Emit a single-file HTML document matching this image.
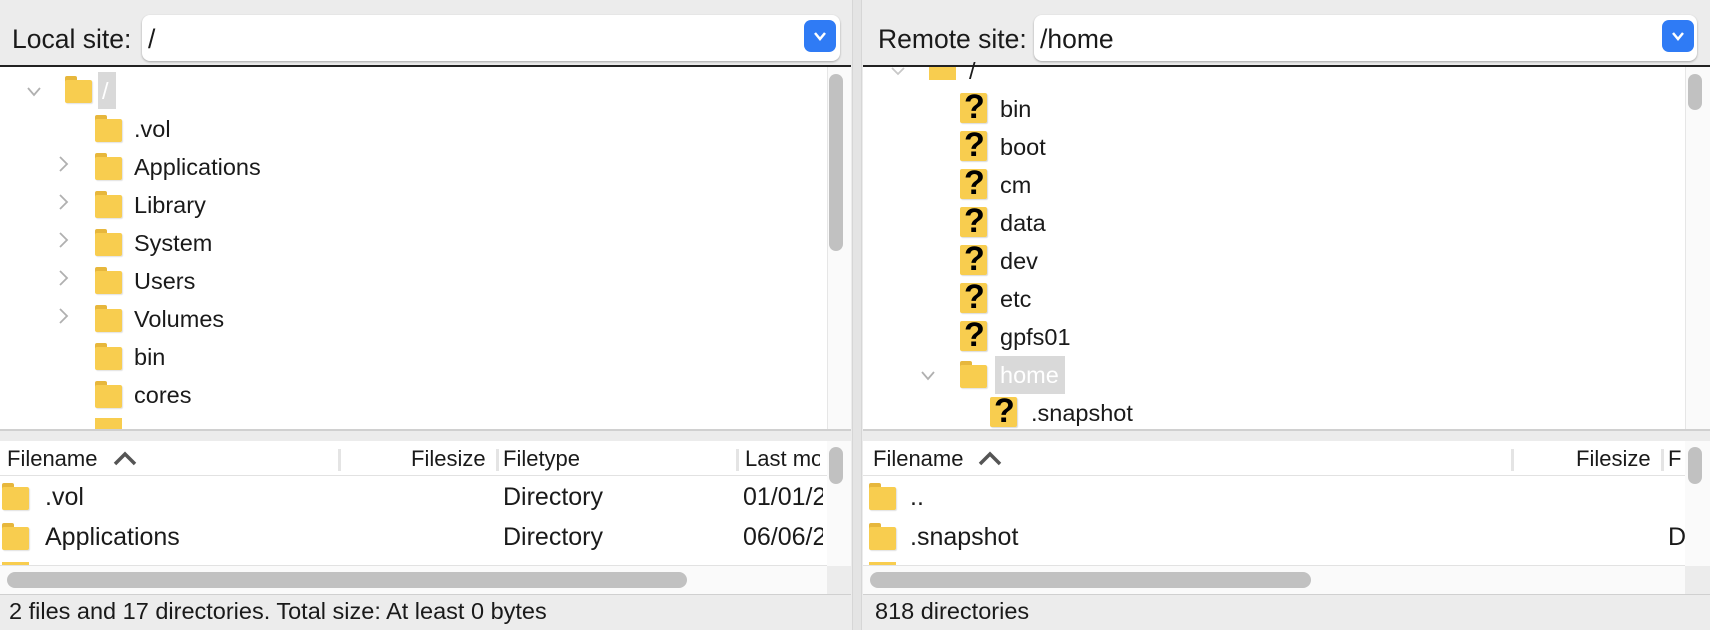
<!DOCTYPE html>
<html><head><meta charset="utf-8"><style>
*{margin:0;padding:0;box-sizing:border-box}
body{width:1710px;height:630px;background:#ececec;font-family:"Liberation Sans",sans-serif;color:#1a1a1a;position:relative;overflow:hidden;font-size:23.5px}
.a{position:absolute;white-space:nowrap}
.fold{position:absolute;width:27px;height:27px}
.fold:before{content:"";position:absolute;left:0;top:0;width:12px;height:6px;background:#e7b73c;border-radius:2px 2px 0 0}
.fold:after{content:"";position:absolute;left:0;top:4px;width:27px;height:23px;background:#f8cd4f;border-radius:2px;box-shadow:1px 1px 1px rgba(0,0,0,.12)}
.q{position:absolute;width:27px;height:30px;background:#f8cd4f;border-radius:2px;box-shadow:1px 1px 1px rgba(0,0,0,.15)}
.q span{position:absolute;left:4px;top:-4px;font-size:34px;font-weight:bold;color:#000;line-height:36px}
.white{position:absolute;background:#fff}
.sb{position:absolute;background:#c1c1c1;border-radius:8px}
.sep{position:absolute;width:3px;height:22px;background:#e4e4e4}
.txt{position:absolute;white-space:nowrap;line-height:26px}
</style></head><body>
<div class="a" style="left:852px;top:0;width:10px;height:630px;background:#e4e4e4;border-left:1px solid #d6d6d6;border-right:1px solid #d6d6d6"></div>

<!-- LEFT header -->
<div class="txt" style="left:12px;top:24px;font-size:26.5px;line-height:30px">Local site:</div>
<div class="a" style="left:142px;top:15px;width:698px;height:46px;background:#fff;border-radius:8px;box-shadow:0 1px 2px rgba(0,0,0,.3)"></div>
<div class="txt" style="left:148px;top:24px;font-size:26.5px;line-height:30px">/</div>
<div class="a" style="left:804px;top:20px;width:32px;height:32px;background:#2f7bf5;border-radius:7px"><svg width="32" height="32"><path d="M11 13l5 6 5-6" stroke="#fff" stroke-width="2.5" fill="none"/></svg></div>
<div class="a" style="left:0;top:65px;width:851px;height:2px;background:#222"></div>

<!-- LEFT tree -->
<div class="white" style="left:0;top:67px;width:827px;height:362px"></div>
<div class="a" style="left:827px;top:67px;width:24px;height:362px;background:#fafafa;border-left:1px solid #e6e6e6"></div>
<div class="sb" style="left:829px;top:74px;width:14px;height:177px"></div>
<svg class="a" style="left:26px;top:86px" width="16" height="12"><path d="M2 2l6 7 6-7" stroke="#b0b0b0" stroke-width="1.8" fill="none"/></svg>
<div class="fold" style="left:65px;top:76px"></div>
<div class="a" style="left:98px;top:72px;width:18px;height:37px;background:#d9d9d9"></div>
<div class="txt" style="left:102px;top:78px;color:#fff">/</div>
<div class="fold" style="left:95px;top:115px"></div><div class="txt" style="left:134px;top:116px">.vol</div>
<svg class="a" style="left:58px;top:155px" width="12" height="18"><path d="M2 2l7 7-7 7" stroke="#b0b0b0" stroke-width="1.8" fill="none"/></svg>
<div class="fold" style="left:95px;top:153px"></div><div class="txt" style="left:134px;top:154px">Applications</div>
<svg class="a" style="left:58px;top:193px" width="12" height="18"><path d="M2 2l7 7-7 7" stroke="#b0b0b0" stroke-width="1.8" fill="none"/></svg>
<div class="fold" style="left:95px;top:191px"></div><div class="txt" style="left:134px;top:192px">Library</div>
<svg class="a" style="left:58px;top:231px" width="12" height="18"><path d="M2 2l7 7-7 7" stroke="#b0b0b0" stroke-width="1.8" fill="none"/></svg>
<div class="fold" style="left:95px;top:229px"></div><div class="txt" style="left:134px;top:230px">System</div>
<svg class="a" style="left:58px;top:269px" width="12" height="18"><path d="M2 2l7 7-7 7" stroke="#b0b0b0" stroke-width="1.8" fill="none"/></svg>
<div class="fold" style="left:95px;top:267px"></div><div class="txt" style="left:134px;top:268px">Users</div>
<svg class="a" style="left:58px;top:307px" width="12" height="18"><path d="M2 2l7 7-7 7" stroke="#b0b0b0" stroke-width="1.8" fill="none"/></svg>
<div class="fold" style="left:95px;top:305px"></div><div class="txt" style="left:134px;top:306px">Volumes</div>
<div class="fold" style="left:95px;top:343px"></div><div class="txt" style="left:134px;top:344px">bin</div>
<div class="fold" style="left:95px;top:381px"></div><div class="txt" style="left:134px;top:382px">cores</div>
<div class="a" style="left:95px;top:418px;width:27px;height:11px;background:#f8cd4f"></div>
<div class="a" style="left:0;top:429px;width:851px;height:2px;background:#d0d0d0"></div>

<!-- LEFT list -->
<div class="white" style="left:0;top:441px;width:827px;height:125px"></div>
<div class="a" style="left:827px;top:441px;width:24px;height:125px;background:#fafafa"></div>
<div class="sb" style="left:829px;top:447px;width:14px;height:37px"></div>
<div class="a" style="left:0;top:475px;width:827px;height:1px;background:#e2e2e2"></div>
<div class="txt" style="left:7px;top:446px;font-size:22px">Filename</div>
<svg class="a" style="left:112px;top:451px" width="26" height="16"><path d="M3 13l10-10 10 10" stroke="#555" stroke-width="3.5" fill="none"/></svg>
<div class="sep" style="left:338px;top:449px"></div>
<div class="txt" style="left:411px;top:446px;font-size:22px">Filesize</div>
<div class="sep" style="left:496px;top:449px"></div>
<div class="txt" style="left:503px;top:446px;font-size:22px">Filetype</div>
<div class="sep" style="left:736px;top:449px"></div>
<div class="a" style="left:745px;top:446px;width:75px;overflow:hidden;line-height:26px;font-size:22px">Last modified</div>
<div class="fold" style="left:2px;top:483px"></div><div class="txt" style="left:45px;top:484px;font-size:25px">.vol</div>
<div class="txt" style="left:503px;top:484px;font-size:25px">Directory</div>
<div class="a" style="left:743px;top:484px;width:80px;overflow:hidden;line-height:26px;font-size:25px">01/01/2020</div>
<div class="fold" style="left:2px;top:523px"></div><div class="txt" style="left:45px;top:524px;font-size:25px">Applications</div>
<div class="txt" style="left:503px;top:524px;font-size:25px">Directory</div>
<div class="a" style="left:743px;top:524px;width:80px;overflow:hidden;line-height:26px;font-size:25px">06/06/2023</div>
<div class="a" style="left:2px;top:562px;width:27px;height:4px;background:#f8cd4f"></div>
<div class="a" style="left:0;top:565px;width:827px;height:29px;background:#fafafa;border-top:1px solid #e2e2e2"></div>
<div class="sb" style="left:7px;top:572px;width:680px;height:16px"></div>
<div class="a" style="left:0;top:594px;width:851px;height:1px;background:#d0d0d0"></div>
<div class="txt" style="left:9px;top:598px;font-size:23.5px">2 files and 17 directories. Total size: At least 0 bytes</div>

<!-- RIGHT header -->
<div class="txt" style="left:878px;top:24px;font-size:26.5px;line-height:30px">Remote site:</div>
<div class="a" style="left:1034px;top:15px;width:663px;height:46px;background:#fff;border-radius:8px;box-shadow:0 1px 2px rgba(0,0,0,.3)"></div>
<div class="txt" style="left:1040px;top:24px;font-size:26.5px;line-height:30px">/home</div>
<div class="a" style="left:1662px;top:20px;width:32px;height:32px;background:#2f7bf5;border-radius:7px"><svg width="32" height="32"><path d="M11 13l5 6 5-6" stroke="#fff" stroke-width="2.5" fill="none"/></svg></div>
<div class="a" style="left:863px;top:65px;width:847px;height:2px;background:#222"></div>

<!-- RIGHT tree -->
<div class="white" style="left:863px;top:67px;width:822px;height:362px"></div>
<div class="a" style="left:1685px;top:67px;width:25px;height:362px;background:#fafafa;border-left:1px solid #e6e6e6"></div>
<div class="sb" style="left:1688px;top:74px;width:14px;height:36px"></div>
<svg class="a" style="left:890px;top:67px" width="16" height="10"><path d="M2 1l6 6 6-6" stroke="#c8c8c8" stroke-width="1.8" fill="none"/></svg>
<div class="a" style="left:929px;top:67px;width:27px;height:13px;background:#f8cd4f"></div>
<div class="txt" style="left:969px;top:58px">/</div>
<div class="q" style="left:960px;top:93px"><span>?</span></div><div class="txt" style="left:1000px;top:96px">bin</div>
<div class="q" style="left:960px;top:131px"><span>?</span></div><div class="txt" style="left:1000px;top:134px">boot</div>
<div class="q" style="left:960px;top:169px"><span>?</span></div><div class="txt" style="left:1000px;top:172px">cm</div>
<div class="q" style="left:960px;top:207px"><span>?</span></div><div class="txt" style="left:1000px;top:210px">data</div>
<div class="q" style="left:960px;top:245px"><span>?</span></div><div class="txt" style="left:1000px;top:248px">dev</div>
<div class="q" style="left:960px;top:283px"><span>?</span></div><div class="txt" style="left:1000px;top:286px">etc</div>
<div class="q" style="left:960px;top:321px"><span>?</span></div><div class="txt" style="left:1000px;top:324px">gpfs01</div>
<svg class="a" style="left:920px;top:370px" width="16" height="12"><path d="M2 2l6 7 6-7" stroke="#b0b0b0" stroke-width="1.8" fill="none"/></svg>
<div class="fold" style="left:960px;top:361px"></div>
<div class="a" style="left:995px;top:356px;width:70px;height:38px;background:#d9d9d9"></div>
<div class="txt" style="left:1000px;top:362px;color:#fff">home</div>
<div class="q" style="left:990px;top:397px"><span>?</span></div><div class="txt" style="left:1031px;top:400px">.snapshot</div>
<div class="a" style="left:863px;top:429px;width:847px;height:2px;background:#d0d0d0"></div>

<!-- RIGHT list -->
<div class="white" style="left:863px;top:441px;width:822px;height:125px"></div>
<div class="a" style="left:1685px;top:441px;width:25px;height:125px;background:#fafafa"></div>
<div class="sb" style="left:1688px;top:447px;width:14px;height:37px"></div>
<div class="a" style="left:863px;top:475px;width:822px;height:1px;background:#e2e2e2"></div>
<div class="txt" style="left:873px;top:446px;font-size:22px">Filename</div>
<svg class="a" style="left:977px;top:451px" width="26" height="16"><path d="M3 13l10-10 10 10" stroke="#555" stroke-width="3.5" fill="none"/></svg>
<div class="sep" style="left:1511px;top:449px"></div>
<div class="txt" style="left:1576px;top:446px;font-size:22px">Filesize</div>
<div class="sep" style="left:1661px;top:449px"></div>
<div class="a" style="left:1668px;top:446px;width:14px;overflow:hidden;line-height:26px;font-size:22px">Filetype</div>
<div class="fold" style="left:869px;top:483px"></div><div class="txt" style="left:910px;top:484px;font-size:25px">..</div>
<div class="fold" style="left:869px;top:523px"></div><div class="txt" style="left:910px;top:524px;font-size:25px">.snapshot</div>
<div class="a" style="left:1668px;top:524px;width:17px;overflow:hidden;line-height:26px;font-size:25px">Directory</div>
<div class="a" style="left:869px;top:562px;width:27px;height:4px;background:#f8cd4f"></div>
<div class="a" style="left:863px;top:565px;width:822px;height:29px;background:#fafafa;border-top:1px solid #e2e2e2"></div>
<div class="sb" style="left:870px;top:572px;width:441px;height:16px"></div>
<div class="a" style="left:863px;top:594px;width:847px;height:1px;background:#d0d0d0"></div>
<div class="txt" style="left:875px;top:598px;font-size:23.5px">818 directories</div>
</body></html>
